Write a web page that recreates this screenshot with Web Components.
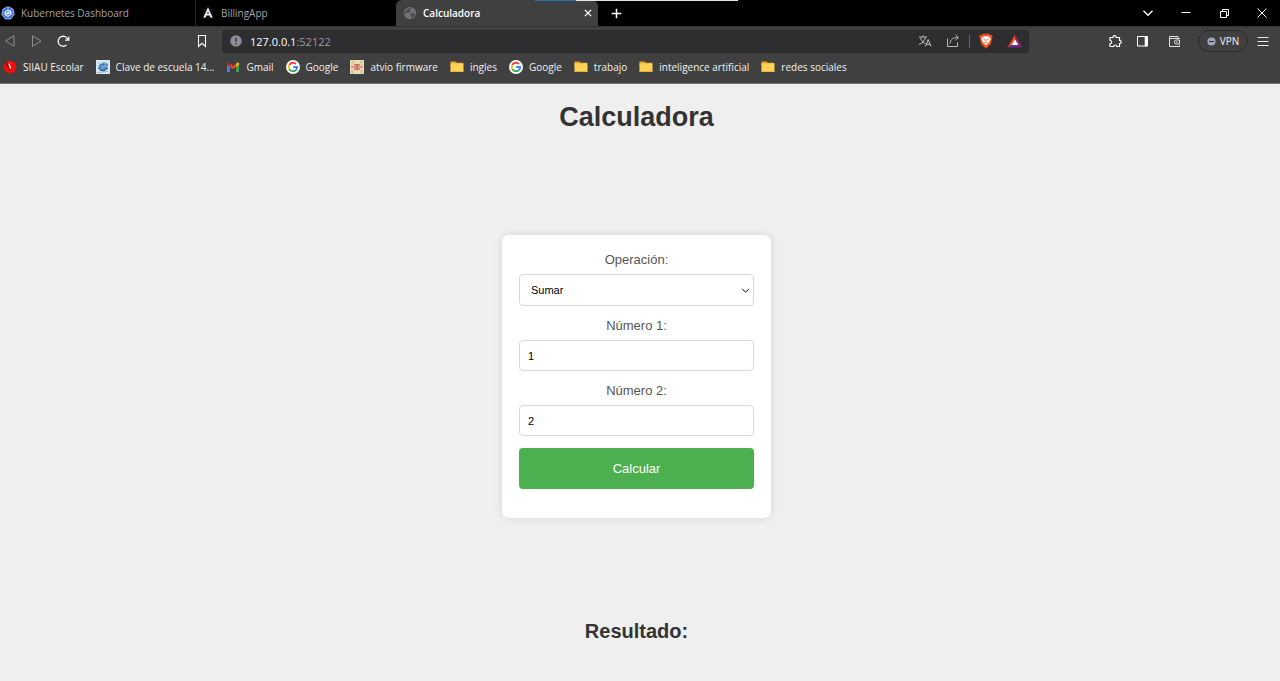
<!DOCTYPE html>
<html lang="es">
<head>
<meta charset="utf-8">
<title>Calculadora</title>
<style>
  html, body { margin: 0; min-height: 100%; }
  body { min-height: 100vh; display: flex; background: #efefef; }
</style>
</head>
<body>
<browser-window></browser-window>

<script>
const ICONS = {
  kubernetes: `<svg viewBox="0 0 16 16"><path d="M8 .8l5.6 2.6 1.6 6-4 5.4H4.8l-4-5.4 1.6-6z" fill="#326ce5" stroke="#dfe8fb" stroke-width=".8"/><circle cx="8" cy="8.2" r="3.4" fill="none" stroke="#fff" stroke-width="1"/><path d="M8 3v10.4M3 7l10 2.600M4.400 12l7.200-7.600M3 9.600l10-2.800" stroke="#fff" stroke-width=".7"/><circle cx="8" cy="8.200" r="1" fill="#fff"/></svg>`,
  angular: `<svg viewBox="0 0 16 16"><path d="M8 .5l7 2.500-1 9.500-6 3.200-6-3.200L1 3z" fill="#0b0d12"/><path d="M8 2L3 13h2l1-2.400h4L11 13h2zm0 3.800L9.400 9H6.600z" fill="#fff" stroke="#fff" stroke-width=".4"/></svg>`,
  globe: `<svg viewBox="0 0 16 16"><circle cx="8" cy="8" r="7" fill="#707377"/><path d="M4.500 4.500l3-2.500 2 .5-1.500 2 1 1.500-2 1.500H4L2.500 9l-.8-2zM8 8.500l3.500-.5 2.500 1.500-1.500 2.500-2.500 2-1-2.500z" fill="#494b4e"/></svg>`,
  close: `<svg viewBox="0 0 16 16"><path d="M3 3l10 10m0-10l-10 10" stroke="#fff" stroke-width="2.200"/></svg>`,
  plus: `<svg viewBox="0 0 16 16"><path d="M8 1v14M1 8h14" stroke="#fff" stroke-width="2.200"/></svg>`,
  chevron: `<svg viewBox="0 0 12 12"><path d="M1.500 3.800L6 8.300l4.500-4.500" fill="none" stroke="currentColor" stroke-width="1.300"/></svg>`,
  minimize: `<svg viewBox="0 0 12 12"><path d="M1.500 5.500h9" stroke="#fff"/></svg>`,
  restore: `<svg viewBox="0 0 12 12"><path d="M2.500 4.500h6v6h-6zM4.500 4V2.500h6v6H9" fill="none" stroke="#fff"/></svg>`,
  exit: `<svg viewBox="0 0 12 12"><path d="M1.500 1.500l9 9m0-9l-9 9" stroke="#fff" stroke-width="1"/></svg>`,
  back: `<svg viewBox="0 0 16 16"><path d="M12 2.700v10.600L3.500 8z" fill="none" stroke="#8d8f92" stroke-linejoin="round"/></svg>`,
  forward: `<svg viewBox="0 0 16 16"><path d="M3.500 2.700v10.600L12 8z" fill="none" stroke="#8d8f92" stroke-linejoin="round"/></svg>`,
  reload: `<svg viewBox="0 0 16 16"><path d="M10.500 12A5 5 0 1 1 12 7" fill="none" stroke="#fff" stroke-width="1.300"/><path d="M9.200 7.200h3.600V3.600" fill="none" stroke="#fff" stroke-width="1.200"/></svg>`,
  bookmark: `<svg viewBox="0 0 16 16"><path d="M4.500 2.500h7v11L8 10.300l-3.500 3.200z" fill="none" stroke="#fff" stroke-width="1.100"/></svg>`,
  info: `<svg viewBox="0 0 12 12"><circle cx="6" cy="6" r="5.700" fill="#8d8f98"/><path d="M6 2.700v4M6 8v1.400" stroke="#35363a" stroke-width="1.500"/></svg>`,
  translate: `<svg viewBox="0 0 16 16"><path d="M2 4h8M6 2.500V4M3.500 5c1 3 3 5 5 6M8.500 4.500c-1 3.500-3.500 6-6.500 7M8.500 13.500l2.700-7 2.800 7M9.400 11.300H13" fill="none" stroke="#c0c1c3"/></svg>`,
  share: `<svg viewBox="0 0 16 16"><path d="M2.500 5.500v8h10V9.500M5 10.500c.3-4 3-6 8-6M10.500 1.800L13.400 4.500l-2.900 2.700" fill="none" stroke="#b5b6b8"/></svg>`,
  brave: `<svg viewBox="0 0 16 16"><path d="M5 .8h6l1.300 1.200 1.500-.2.900 2-.6 1.200-1.300 6.200L8 15.600l-4.800-4.400L1.900 5l-.6-1.200.9-2 1.500.2z" fill="#f1501b"/><path d="M4 4.200l2.200-.9h3.600l2.200.9.500 2-1.600 3.400L8 12.600 5.100 9.600 3.500 6.200z" fill="#fff"/><path d="M5 5.700l2 .8v2M11 5.700l-2 .8v2M6 10l2-.8 2 .8" stroke="#f1501b" stroke-width=".7" fill="none"/></svg>`,
  bat: `<svg viewBox="0 0 16 16"><path d="M8 2L.5 14.500 8 10z" fill="#ff4724"/><path d="M8 2l7.500 12.500L8 10z" fill="#9e1f63"/><path d="M.5 14.500h15L8 10z" fill="#662d91"/><path d="M8 6.300l3.300 5.700H4.700z" fill="#fff"/></svg>`,
  puzzle: `<svg viewBox="0 0 16 16"><path d="M3 4.500h3c-.6-2.600 3.600-2.600 3 0h3.500v3c2.300-.5 2.300 3.500 0 3v3H9.800c.3-2-3.300-2-3 0H3v-3c2.200.3 2.200-3.300 0-3z" fill="none" stroke="#fff" stroke-width="1.200" stroke-linejoin="round"/></svg>`,
  panel: `<svg viewBox="0 0 16 16"><path d="M3.500 3.500h10v9.500h-10z" fill="none" stroke="#fff"/><path d="M11 3.500h2.500v9.500H11z" fill="#fff" stroke="#fff" stroke-width=".6"/></svg>`,
  wallet: `<svg viewBox="0 0 16 16"><path d="M13.500 6V5.500h-10V3.500h8.500V5M3.500 4v9.500h10V12" fill="none" stroke="#e1e2e3"/><path d="M9.500 7h4v4h-4l-1.200-2z" fill="#404040" stroke="#e1e2e3"/><circle cx="11" cy="9" r=".7" fill="#fff"/></svg>`,
  vpn: `<svg viewBox="0 0 10 10"><circle cx="5" cy="5" r="4.500" fill="#a3a5bd"/><path d="M2.300 5h5.400" stroke="#34353d" stroke-width="1.300"/></svg>`,
  menu: `<svg viewBox="0 0 16 16"><path d="M2.500 4.500h11M2.500 8.500h11M2.500 12.500h11" stroke="#e8e8e8"/></svg>`,
  siiau: `<svg viewBox="0 0 14 14"><circle cx="7" cy="7" r="6.300" fill="#f20d0d"/><path d="M2.500 2.500L7 10" stroke="#9c0808" stroke-width="1.600" fill="none"/><path d="M6 3.500l1.500 5" stroke="#fff" stroke-width="1.200"/></svg>`,
  school: `<svg viewBox="0 0 14 14"><path d="M0 0h14v14H0z" fill="#d9e7f2"/><path d="M3 5l5-3 4 2-1 5-5 2-4-2z" fill="#3f7eb5"/><path d="M1 12.500l11-1M4 7l6-2M5 9l6-3M7 3l3 1M2 4l2-2" stroke="#8fb8d8"/><path d="M4 10l4 1 4-3" stroke="#1d5288" fill="none"/></svg>`,
  gmail: `<svg viewBox="0 0 14 14"><path d="M1 4v8h2.800V6.500z" fill="#4285f4"/><path d="M13 4v8h-2.800V6.500z" fill="#34a853"/><path d="M3.800 3.500L7 6l3.200-2.500v3.400L7 9.300 3.800 6.900z" fill="#ea4335"/><path d="M1 4.200c0-2 1.500-2 2.800-.7v3.400L1 4.900z" fill="#c5221f"/><path d="M13 4.200c0-2-1.500-2-2.800-.7v3.400L13 4.900z" fill="#fbbc04"/></svg>`,
  google: `<svg viewBox="0 0 14 14"><circle cx="7" cy="7" r="7" fill="#fff"/><g fill="none" stroke-width="1.900"><path d="M3.300 4.900A4.200 4.200 0 0 1 10 4" stroke="#ea4335"/><path d="M3.300 9.100a4.200 4.200 0 0 1 0-4.200" stroke="#fbbc05"/><path d="M3.300 9.100A4.200 4.200 0 0 0 9.700 10.200" stroke="#34a853"/><path d="M9.700 10.200A4.200 4.200 0 0 0 11.200 7H7.200" stroke="#4285f4"/></g></svg>`,
  atvio: `<svg viewBox="0 0 14 14"><path d="M0 0h14v14H0z" fill="#e6e3b0"/><path d="M3 0v14M11 0v14M0 4h14M0 10h14" stroke="#f0c3a8"/><path d="M1 7h12" stroke="#d9686a" stroke-width="1.200"/><path d="M4 5h6M4 9h6M7 4v6" stroke="#b5474f"/><path d="M1 2h3M10 2h3M1 12h3M10 12h3" stroke="#9cc08e"/></svg>`,
  folder: `<svg viewBox="0 0 14 14"><path d="M.5 1.500h5l1.300 1.300H13V6H.5z" fill="#e5a323"/><path d="M.5 3.300h13v8.700H.5z" fill="#ffd257"/><path d="M.5 11.200h13v.8H.5z" fill="#e3ae35"/></svg>`
};

class BaseElement extends HTMLElement {
  constructor() {
    super();
    this.attachShadow({ mode: 'open' });
  }
  connectedCallback() {
    if (!this.shadowRoot.firstChild) this.shadowRoot.innerHTML = this.render();
  }
}

customElements.define('ui-icon', class extends BaseElement {
  render() {
    return `<style>
      :host { display: block; flex: none; width: var(--icon-size, 16px); height: var(--icon-size, 16px); }
      svg { display: block; width: 100%; height: 100%; }
    </style>${ICONS[this.getAttribute('name')]}`;
  }
});

customElements.define('icon-button', class extends BaseElement {
  render() {
    return `<style>
      :host { display: block; flex: none; }
      button { display: grid; place-items: center; width: 100%; height: 100%; margin: 0; padding: 0;
               border: 0; background: none; color: inherit; }
    </style><button type="button" aria-label="${this.getAttribute('label')}"><ui-icon name="${this.getAttribute('icon')}"></ui-icon></button>`;
  }
});

customElements.define('browser-tab', class extends BaseElement {
  render() {
    const closer = this.hasAttribute('active') ? '<icon-button icon="close" label="Cerrar pestaña"></icon-button>' : '';
    return `<style>
      :host { display: flex; align-items: center; box-sizing: border-box; min-width: 0; height: 26px; flex: 0 1 200px;
              border-right: 1px solid #2b2b2b; color: #a3a4a6; --icon-size: 14px; }
      :host([first]) { flex-basis: 196px; }
      :host([before-active]) { border-color: transparent; }
      :host([active]) { flex-basis: 202px; border: 0; border-radius: 6px 6px 0 0; background: #404040; color: #fff; font-weight: 600; }
      .tab { display: flex; align-items: center; gap: 6px; flex: 1; min-width: 0; height: 100%; margin: 0; padding: 0 5px; border: 0;
             background: none; font: inherit; color: inherit; white-space: nowrap; }
      :host([first]) .tab { padding-left: 1px; }
      :host([active]) .tab { padding-left: 7px; }
      icon-button { --icon-size: 10px; width: 20px; height: 20px; }
    </style>
    <button class="tab" type="button"><ui-icon name="${this.getAttribute('icon')}"></ui-icon><slot></slot></button>${closer}`;
  }
});

customElements.define('tab-strip', class extends BaseElement {
  render() {
    return `<style>
      :host { display: flex; position: relative; height: 26px; background: #000; color: #fff; }
      .new { width: 36px; --icon-size: 11px; }
      .controls { display: flex; gap: 2px; margin-left: auto; --icon-size: 12px; }
      .controls icon-button { width: 36px; }
      .progress { position: absolute; top: 0; left: 535px; display: flex; width: 203px; height: 1px; background: #e6e6e6; }
      .progress i { width: 41px; background: #2674ae; }
    </style>
    <browser-tab first icon="kubernetes">Kubernetes Dashboard</browser-tab>
    <browser-tab before-active icon="angular">BillingApp</browser-tab>
    <browser-tab active icon="globe">Calculadora</browser-tab>
    <icon-button class="new" icon="plus" label="Nueva pestaña"></icon-button>
    <div class="controls">
      <icon-button icon="chevron" label="Buscar pestañas"></icon-button>
      <icon-button icon="minimize" label="Minimizar"></icon-button>
      <icon-button icon="restore" label="Restaurar"></icon-button>
      <icon-button icon="exit" label="Cerrar"></icon-button>
    </div>
    <div class="progress"><i></i></div>`;
  }
});

customElements.define('address-bar', class extends BaseElement {
  render() {
    return `<style>
      :host { display: flex; align-items: center; flex: 1; min-width: 0; box-sizing: border-box; height: 23px; padding: 0 6px 0 8px;
              border-radius: 3px; background: #2e2e30; color: #9a9b9d; font-size: 11px; }
      .site { --icon-size: 12px; margin-right: 8px; }
      input { field-sizing: content; margin: 0; padding: 0; border: 0; outline: 0; background: none; font: inherit; color: #fff; }
      .actions { display: flex; align-items: center; margin-left: auto; gap: 8px; }
      .page { display: flex; gap: 12px; }
      .rule { width: 1px; height: 13px; background: #68696b; }
      .brave { display: flex; gap: 13px; }
    </style>
    <icon-button class="site" icon="info" label="Información del sitio"></icon-button>
    <input aria-label="Dirección" value="127.0.0.1" size="8"><span>:52122</span>
    <div class="actions">
      <div class="page">
        <icon-button icon="translate" label="Traducir"></icon-button>
        <icon-button icon="share" label="Compartir"></icon-button>
      </div>
      <div class="rule"></div>
      <div class="brave">
        <icon-button icon="brave" label="Brave Shields"></icon-button>
        <icon-button icon="bat" label="Brave Rewards"></icon-button>
      </div>
    </div>`;
  }
});

customElements.define('tool-bar', class extends BaseElement {
  render() {
    return `<style>
      :host { display: flex; align-items: center; height: 28px; }
      .nav { display: flex; gap: 11px; flex: 0 0 208px; padding: 0 12px 0 2px; }
      .mark { margin-left: auto; }
      .tools { display: flex; align-items: center; justify-content: flex-end; flex: 0 0 242px; padding-right: 9px; gap: 16px; }
      .pair { display: flex; gap: 11px; }
      .end { display: flex; align-items: center; gap: 7px; }
      .vpn { display: flex; align-items: center; justify-content: center; gap: 4px; width: 50px; height: 22px; margin: 0; padding: 0;
             border: 1px solid #2c2c2c; border-radius: 11px; background: none; color: #f0f0f0; font: inherit; --icon-size: 9px; }
    </style>
    <div class="nav">
      <icon-button icon="back" label="Atrás"></icon-button>
      <icon-button icon="forward" label="Adelante"></icon-button>
      <icon-button icon="reload" label="Recargar"></icon-button>
      <icon-button class="mark" icon="bookmark" label="Guardar marcador"></icon-button>
    </div>
    <address-bar></address-bar>
    <div class="tools">
      <div class="pair">
        <icon-button icon="puzzle" label="Extensiones"></icon-button>
        <icon-button icon="panel" label="Panel lateral"></icon-button>
      </div>
      <icon-button icon="wallet" label="Billetera"></icon-button>
      <div class="end">
        <button class="vpn" type="button"><ui-icon name="vpn"></ui-icon>VPN</button>
        <icon-button icon="menu" label="Menú"></icon-button>
      </div>
    </div>`;
  }
});

customElements.define('bookmark-link', class extends BaseElement {
  render() {
    return `<style>
      :host { display: block; flex: none; --icon-size: 14px; }
      a { display: flex; align-items: center; gap: 6px; color: #f1f1f1; text-decoration: none; white-space: nowrap; }
    </style><a href="#"><ui-icon name="${this.getAttribute('icon')}"></ui-icon><slot></slot></a>`;
  }
});

customElements.define('bookmark-bar', class extends BaseElement {
  render() {
    return `<style>
      :host { display: flex; align-items: center; gap: 12px; height: 24px; padding: 0 3px 4px; overflow: hidden; }
    </style>
    <bookmark-link icon="siiau">SIIAU Escolar</bookmark-link>
    <bookmark-link icon="school">Clave de escuela 14...</bookmark-link>
    <bookmark-link icon="gmail">Gmail</bookmark-link>
    <bookmark-link icon="google">Google</bookmark-link>
    <bookmark-link icon="atvio">atvio firmware</bookmark-link>
    <bookmark-link icon="folder">ingles</bookmark-link>
    <bookmark-link icon="google">Google</bookmark-link>
    <bookmark-link icon="folder">trabajo</bookmark-link>
    <bookmark-link icon="folder">inteligence artificial</bookmark-link>
    <bookmark-link icon="folder">redes sociales</bookmark-link>`;
  }
});

customElements.define('calculator-form', class extends BaseElement {
  render() {
    return `<style>
      :host { display: block; box-sizing: border-box; width: 269px; padding: 17px 17px 29px; border-radius: 7px; background: #fff;
              box-shadow: 0 0 8px rgba(0, 0, 0, .1); }
      form { display: flex; flex-direction: column; margin: 0; }
      label { margin-bottom: 7px; font-size: 13px; line-height: 15px; text-align: center; color: #555; }
      input, select { box-sizing: border-box; width: 100%; margin: 0 0 12px; border: 1px solid #d8d8d8; border-radius: 4px; background: #fff;
              font: 11px "Liberation Sans", Arial, sans-serif; color: #000; }
      input { height: 31px; padding: 0 8px; appearance: textfield; }
      .choice { display: grid; align-items: center; margin-bottom: 12px; --icon-size: 9px; }
      .choice > * { grid-area: 1 / 1; }
      select { height: 32px; margin: 0; padding: 0 11px; appearance: none; }
      .choice ui-icon { justify-self: end; margin-right: 4px; color: #000; pointer-events: none; }
      button { height: 41px; margin: 0; padding: 0; border: 0; border-radius: 4px; background: #4caf50; color: #fff;
               font: 13px "Liberation Sans", Arial, sans-serif; }
    </style>
    <form>
      <label for="op">Operación:</label>
      <div class="choice">
        <select id="op"><option>Sumar</option><option>Restar</option><option>Multiplicar</option><option>Dividir</option></select>
        <ui-icon name="chevron"></ui-icon>
      </div>
      <label for="n1">Número 1:</label>
      <input id="n1" type="number" value="1">
      <label for="n2">Número 2:</label>
      <input id="n2" type="number" value="2">
      <button type="button">Calcular</button>
    </form>`;
  }
  connectedCallback() {
    super.connectedCallback();
    const $ = (s) => this.shadowRoot.querySelector(s);
    $('button').addEventListener('click', () => {
      const a = +$('#n1').value, b = +$('#n2').value;
      const result = [a + b, a - b, a * b, a / b][$('#op').selectedIndex];
      this.dispatchEvent(new CustomEvent('result', { detail: result }));
    });
  }
});

customElements.define('calculator-page', class extends BaseElement {
  render() {
    return `<style>
      :host { display: flex; flex-direction: column; align-items: center; box-sizing: border-box; padding: 18px 7px 39px 0;
              background: #efefef; color: #333; font-family: "Liberation Sans", Arial, sans-serif; }
      h1 { margin: 0; font-size: 27px; line-height: 31px; }
      main { display: grid; place-items: center; flex: 1; }
      h2 { margin: 0; font-size: 20px; line-height: 22px; }
    </style>
    <h1>Calculadora</h1>
    <main><calculator-form></calculator-form></main>
    <h2>Resultado: <output></output></h2>`;
  }
  connectedCallback() {
    super.connectedCallback();
    this.shadowRoot.querySelector('calculator-form').addEventListener('result', (e) => {
      this.shadowRoot.querySelector('output').textContent = e.detail;
    });
  }
});

customElements.define('browser-window', class extends BaseElement {
  render() {
    return `<style>
      :host { display: flex; flex-direction: column; flex: 1; min-width: 0; min-height: 100vh;
              font: 10px "Open Sans", "Segoe UI", sans-serif; color: #fff; }
      .bars { border-bottom: 1px solid #777; background: #404040; border-top: 1px solid #333; }
      calculator-page { flex: 1; }
    </style>
    <tab-strip></tab-strip>
    <div class="bars">
      <tool-bar></tool-bar>
      <bookmark-bar></bookmark-bar>
    </div>
    <calculator-page></calculator-page>`;
  }
});
</script>
</body>
</html>
